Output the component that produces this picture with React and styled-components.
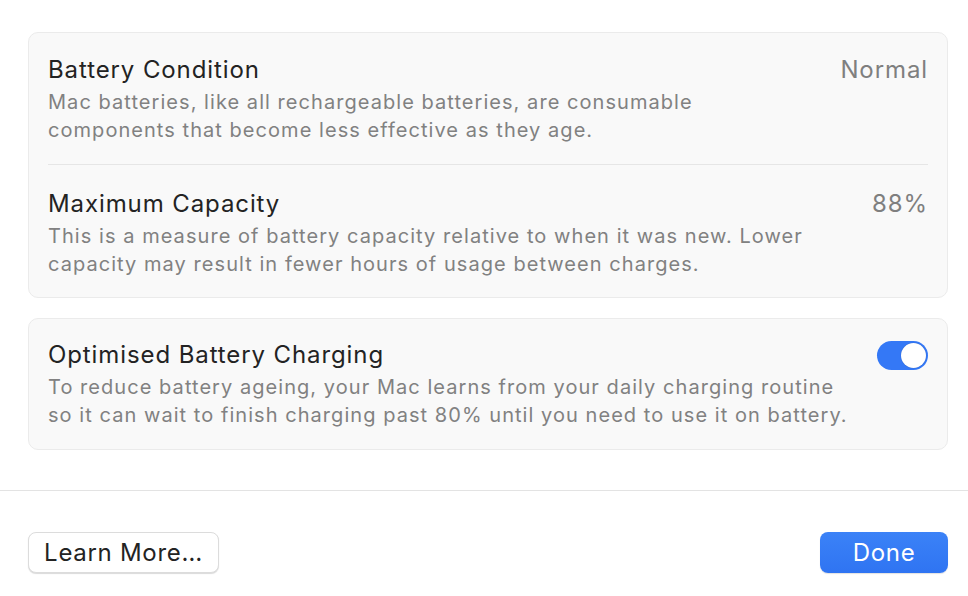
import React from "react";
import styled, { createGlobalStyle } from "styled-components";

const Global = createGlobalStyle`
  html, body { margin: 0; padding: 0; background: #ffffff; }
  body { font-family: Inter, "Noto Sans", "Liberation Sans", sans-serif; -webkit-font-smoothing: antialiased; }
`;

const Sheet = styled.div`
  width: 968px;
  height: 596px;
  background: #ffffff;
  display: flex;
  flex-direction: column;
  box-sizing: border-box;
`;

const Content = styled.div`
  display: flex;
  flex-direction: column;
  gap: 20px;
  padding: 32px 20px 0 28px;
  height: 490px;
  box-sizing: border-box;
`;

const Card = styled.div`
  background: #f9f9f9;
  border: 1px solid #ebebeb;
  border-radius: 10px;
  padding: 0 19px;
  display: flex;
  flex-direction: column;
`;

const Row = styled.div`
  display: flex;
  align-items: flex-start;
  justify-content: space-between;
  gap: 20px;
  padding: ${(p) => p.$top || "21px"} 0 ${(p) => p.$bottom || "20px"};
  border-bottom: ${(p) => (p.$last ? "none" : "1px solid #e6e6e6")};
`;

const Texts = styled.div`
  display: flex;
  flex-direction: column;
  gap: 3px;
`;

const Title = styled.div`
  font-size: 24px;
  line-height: 30px;
  color: #232323;
  letter-spacing: 0.9px;
`;

const Desc = styled.div`
  font-size: 20px;
  line-height: 28px;
  color: #818181;
  letter-spacing: 1.05px;
  white-space: nowrap;
`;

const Value = styled.div`
  font-size: 24px;
  line-height: 30px;
  color: #7f7f7f;
  letter-spacing: 0.9px;
  white-space: nowrap;
`;

const Switch = styled.div`
  width: 51px;
  height: 29px;
  border-radius: 15px;
  background: #3478f6;
  margin-top: 1px;
  position: relative;
  flex-shrink: 0;
  box-sizing: border-box;
  &::after {
    content: "";
    position: absolute;
    top: 2px;
    right: 2px;
    width: 25px;
    height: 25px;
    border-radius: 50%;
    background: #ffffff;
    box-shadow: 0 0 1px rgba(0,0,0,0.3);
  }
`;

const Footer = styled.div`
  border-top: 1px solid #e3e3e3;
  display: flex;
  justify-content: space-between;
  align-items: flex-start;
  padding: 41px 20px 0 28px;
  flex: 1;
`;

const Button = styled.button`
  font-family: inherit;
  font-size: 24px;
  letter-spacing: 0.7px;
  height: 41px;
  border-radius: 8px;
  padding: 0;
  width: ${(p) => p.$w};
  cursor: pointer;
  display: flex;
  align-items: center;
  justify-content: center;
  color: ${(p) => (p.$primary ? "#ffffff" : "#232323")};
  background: ${(p) => (p.$primary ? "linear-gradient(#3b82f7, #2f74f2)" : "#ffffff")};
  border: ${(p) => (p.$primary ? "none" : "1px solid #dcdcdc")};
  box-shadow: ${(p) => (p.$primary ? "0 1px 1px rgba(0,0,0,0.12)" : "0 1px 1px rgba(0,0,0,0.15)")};
`;

export default function App() {
  return (
    <Sheet>
      <Global />
      <Content>
        <Card>
          <Row $top="22px">
            <Texts>
              <Title>Battery Condition</Title>
              <Desc>
                Mac batteries, like all rechargeable batteries, are consumable
                <br />
                components that become less effective as they age.
              </Desc>
            </Texts>
            <Value>Normal</Value>
          </Row>
          <Row $last $top="24px" $bottom="19px">
            <Texts>
              <Title>Maximum Capacity</Title>
              <Desc>
                This is a measure of battery capacity relative to when it was new. Lower
                <br />
                capacity may result in fewer hours of usage between charges.
              </Desc>
            </Texts>
            <Value>88%</Value>
          </Row>
        </Card>
        <Card>
          <Row $last $top="21px" $bottom="20px">
            <Texts>
              <Title>Optimised Battery Charging</Title>
              <Desc>
                To reduce battery ageing, your Mac learns from your daily charging routine
                <br />
                so it can wait to finish charging past 80% until you need to use it on battery.
              </Desc>
            </Texts>
            <Switch role="switch" aria-checked="true" />
          </Row>
        </Card>
      </Content>
      <Footer>
        <Button $w="191px">Learn More…</Button>
        <Button $primary $w="128px">Done</Button>
      </Footer>
    </Sheet>
  );
}
